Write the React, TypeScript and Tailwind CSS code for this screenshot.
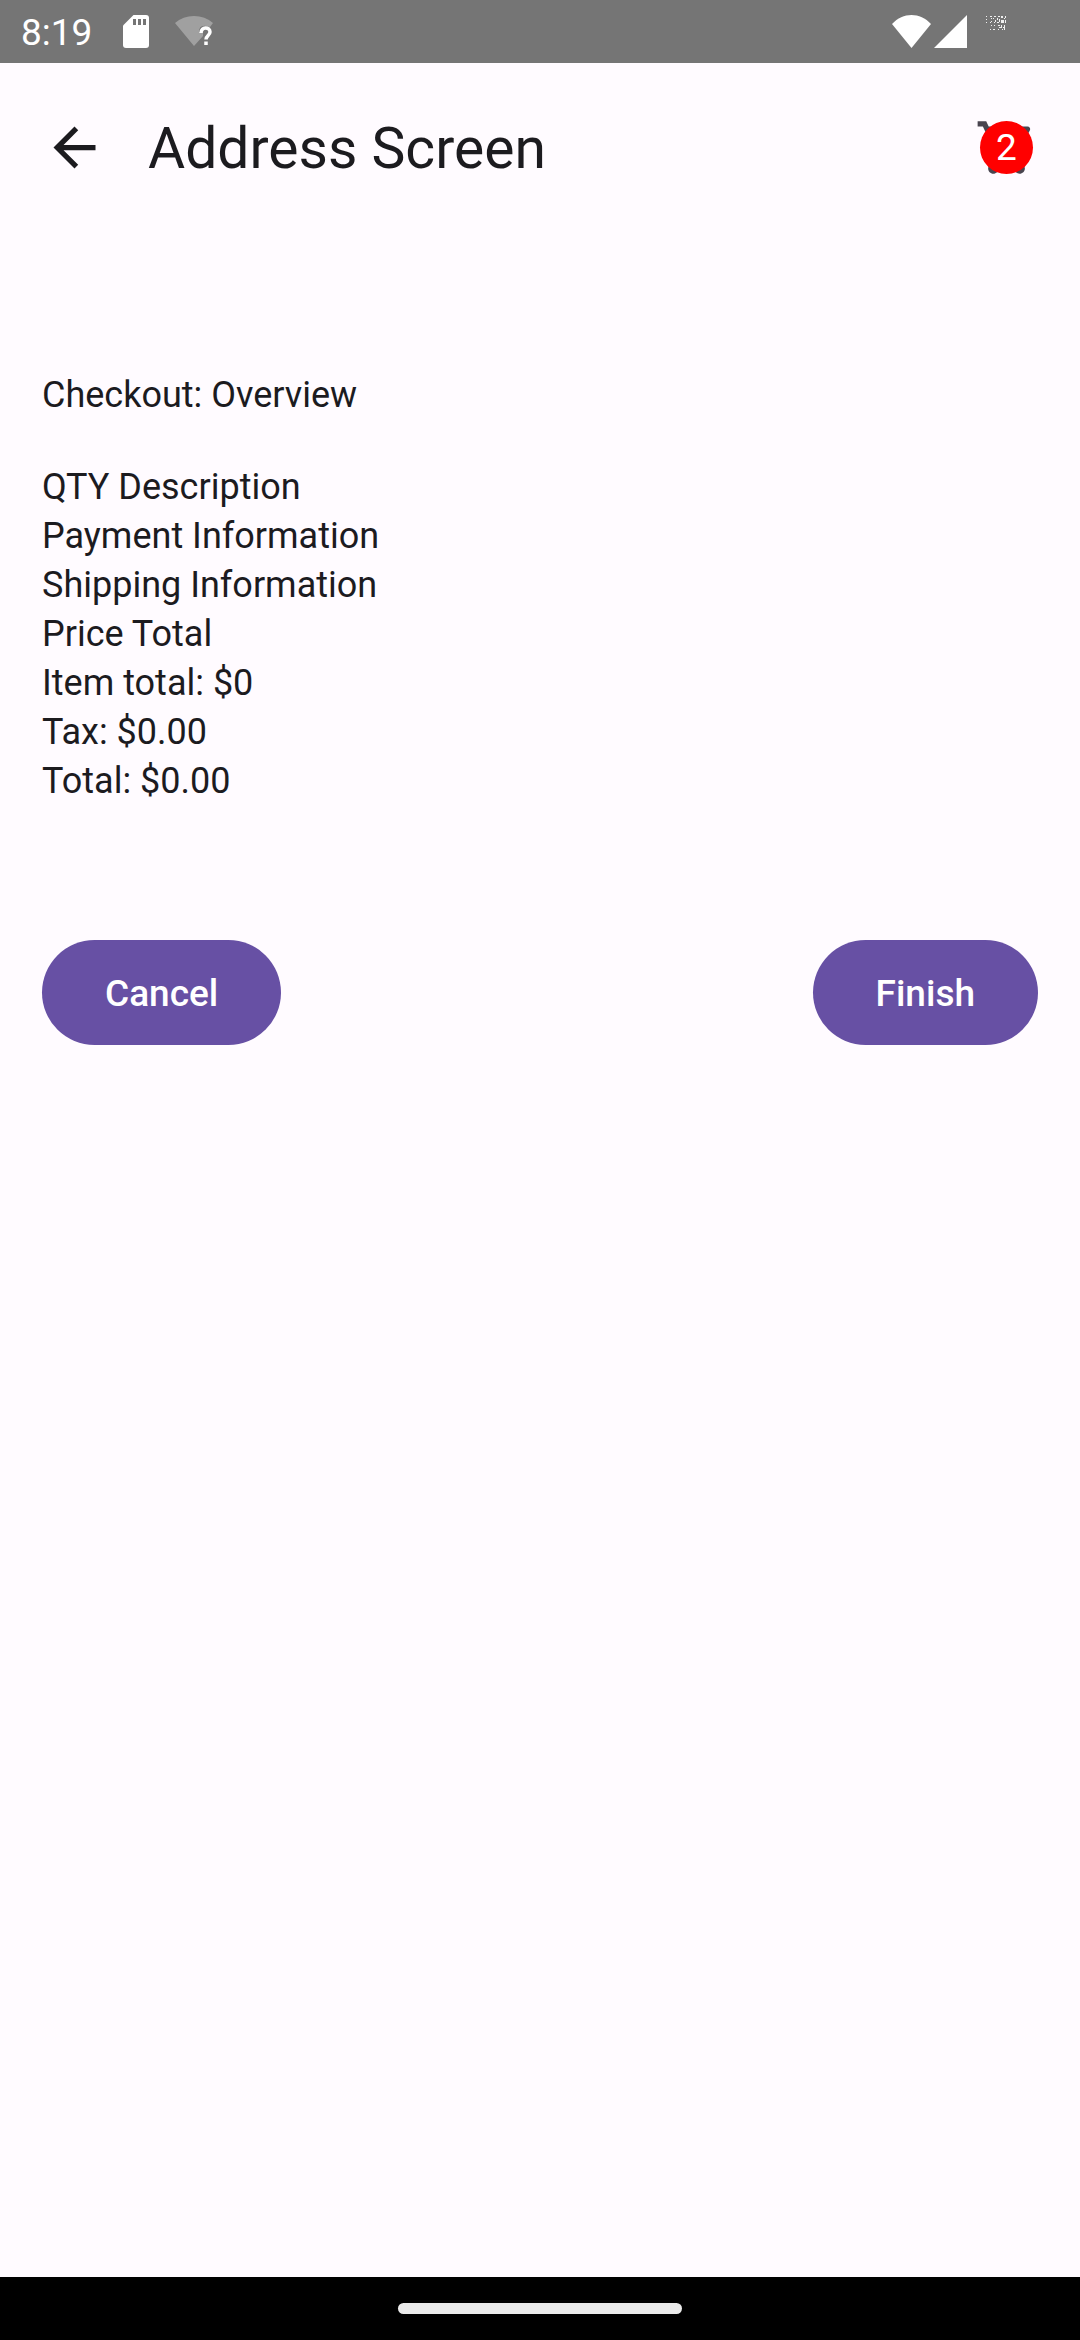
const SUMMARY = [
  "QTY Description",
  "Payment Information",
  "Shipping Information",
  "Price Total",
  "Item total: $0",
  "Tax: $0.00",
  "Total: $0.00",
];

function StatusBar() {
  return (
    <div className="flex h-[63px] shrink-0 items-center bg-[#757575] pl-[21px] text-white">
      <span className="pt-[2px] text-[37px] leading-[61px]">8:19</span>
      <svg className="ml-[31px] h-[33px] w-[26px]" viewBox="0 0 26 33" aria-hidden="true">
        <path d="M10.500 0H23a3 3 0 0 1 3 3V30a3 3 0 0 1-3 3H3a3 3 0 0 1-3-3V10.500z" fill="#fff" />
        <path d="M10 4h3v6h-3zM15 4h3v6h-3zM20 4h3v6h-3z" fill="#757575" />
      </svg>
      <svg className="ml-[26px] h-[33px] w-[38px]" viewBox="0 0 38 33" aria-hidden="true">
        <path d="M0 8Q8 1 19 1T38 8L35 12Q24 8 24 17H28V21L19 31z" fill="#a0a0a0" />
        <path d="M26 18C26 11.500 35 11.500 35 17C35 20.500 31 20.500 31 24.500M31 26.500v3.500" fill="none" stroke="#fff" strokeWidth="3.500" />
      </svg>
      <svg className="ml-auto h-[33px] w-[39px]" viewBox="0 0 39 33" aria-hidden="true">
        <path d="M0 9C11-3 28-3 39 9L19.500 33z" fill="#fff" />
      </svg>
      <svg className="ml-[3px] h-[33px] w-[33px]" viewBox="0 0 33 33" aria-hidden="true">
        <path d="M33 0V33H0z" fill="#fff" />
      </svg>
      <svg className="mr-[73px] ml-[18px] h-[33px] w-[22px]" viewBox="0 0 22 33" shapeRendering="crispEdges" aria-hidden="true">
        <path
          d="M1 1h1v1h-1zM1 4h1v1h-1zM1 7h1v1h-1zM5 1h2v1h-2zM6 3h1v1h-1zM6 6h1v1h-1zM5 7h1v1h-1zM9 1h2v1h-2zM8 3h1v1h-1zM10 5h1v2h-1zM9 7h1v1h-1zM13 1h2v1h-2zM12 3h1v2h-1zM14 4h1v3h-1zM12 7h2v1h-2zM16 1h2v2h-2zM16 5h3v3h-3zM20 1h1v2h-1zM19 3h1v1h-1zM20 5h1v3h-1zM6 10h1v1h-1zM5 14h1v1h-1zM9 10h1v1h-1zM8 14h2v1h-2zM13 10h2v1h-2zM14 12h1v1h-1zM13 14h1v1h-1zM16 10h1v2h-1zM15 12h2v1h-2zM17 14h1v1h-1zM19 10h1v5h-1zM18 12h1v1h-1z"
          fill="#f0f0f0"
        />
      </svg>
    </div>
  );
}

function TopBar() {
  return (
    <header className="flex h-[168px] shrink-0 items-center gap-[42px] pr-[42px] pl-[43px]">
      <button type="button" aria-label="Back" className="shrink-0">
        <svg className="size-[63px]" viewBox="0 0 24 24" fill="#1c1b1f" aria-hidden="true">
          <path d="M20 11H7.830l5.590-5.590L12 4l-8 8 8 8 1.410-1.410L7.830 13H20v-2z" />
        </svg>
      </button>
      <h1 className="grow pt-[4px] text-[57px] leading-[74px]">Address Screen</h1>
      <button type="button" aria-label="Cart, 2 items" className="relative shrink-0">
        <svg className="size-[63px]" viewBox="0 0 24 24" fill="#49454f" aria-hidden="true">
          <path d="M7 18c-1.100 0-1.990.9-1.990 2S5.900 22 7 22s2-.9 2-2-.9-2-2-2zM1 2v2h2l3.600 7.590-1.350 2.450c-.16.28-.25.61-.25.96 0 1.100.9 2 2 2h12v-2H7.420c-.14 0-.25-.11-.25-.25l.03-.12.9-1.630h7.450c.75 0 1.410-.41 1.750-1.030l3.580-6.490A1 1 0 0 0 20 4H5.210l-.94-2H1zm16 16c-1.100 0-1.990.9-1.990 2s.89 2 1.990 2 2-.9 2-2-.9-2-2-2z" />
        </svg>
        <span className="absolute top-[5px] left-[5px] size-[53px] rounded-full bg-[#ff0000] text-center text-[37px] leading-[53px] text-white">
          2
        </span>
      </button>
    </header>
  );
}

export default function App() {
  return (
    <div className="flex min-h-screen flex-col bg-[#fffbff] font-['Roboto',sans-serif] text-[#1c1b1f]">
      <StatusBar />
      <TopBar />
      <main className="grow px-[42px] pt-[140px] text-[36px] leading-[49px]">
        <h2>Checkout: Overview</h2>
        <ul className="mt-[43px]">
          {SUMMARY.map((line) => (
            <li key={line}>{line}</li>
          ))}
        </ul>
        <div className="mt-[134px] flex justify-between">
          {["Cancel", "Finish"].map((label) => (
            <button key={label} type="button" className="h-[105px] rounded-full bg-[#6750a4] px-[63px] pt-[2px] text-[37px] font-medium text-white">
              {label}
            </button>
          ))}
        </div>
      </main>
      <footer className="flex h-[63px] shrink-0 items-center justify-center bg-black">
        <div className="h-[11px] w-[284px] rounded-full bg-[#ebebeb]" />
      </footer>
    </div>
  );
}
